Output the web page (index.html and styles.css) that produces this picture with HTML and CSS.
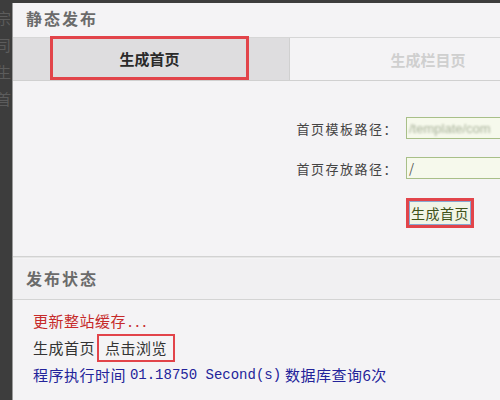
FILE: index.html
```html
<!DOCTYPE html>
<html lang="zh-CN">
<head>
    <meta charset="UTF-8">
    <title>静态发布</title>
    <link rel="stylesheet" href="styles.css">
</head>
<body>
    <div class="side">
        <span>宗</span>
        <span>司</span>
        <span>生</span>
        <span>首</span>
    </div>

    <div class="panel">
        <div class="title">静态发布</div>

        <div class="tabs">
            <div class="tab active">
                <div class="mark">生成首页</div>
            </div>
            <div class="tab">生成栏目页</div>
        </div>

        <div class="form">
            <div class="row">
                <label>首页模板路径：</label>
                <div class="field"><span class="blur">/template/com</span></div>
            </div>
            <div class="row">
                <label>首页存放路径：</label>
                <div class="field">/</div>
            </div>
            <div class="row">
                <label></label>
                <div class="mark-btn"><button>生成首页</button></div>
            </div>
        </div>

        <div class="section-head">发布状态</div>

        <div class="status">
            <div class="line red">更新整站缓存<span class="dots">...</span></div>
            <div class="line">生成首页 <span class="mark-link">点击浏览</span></div>
            <div class="line blue">程序执行时间 <span class="mono">01.18750 Second(s)</span> 数据库查询6次</div>
        </div>
    </div>
</body>
</html>
```

FILE: styles.css
```css
body {
    margin: 0;
    background: #3d3d3d;
    font-family: 'Noto Sans CJK SC', 'DejaVu Sans', sans-serif;
    display: flex;
    height: 400px;
    overflow: hidden;
    padding-top: 3px;
    box-sizing: border-box;
}

.side {
    width: 12px;
    flex-shrink: 0;
    display: flex;
    flex-direction: column;
    gap: 9px;
    padding-top: 6px;
    overflow: hidden;
    color: #5c5c5c;
    font-size: 15px;
    line-height: 18px;
    text-indent: -4px;
}

.panel {
    flex: 1;
    background: #f4f3f5;
    overflow: hidden;
    border-left: 1px solid #9a9a9a;
}

.title {
    height: 34px;
    line-height: 30px;
    padding-left: 13px;
    font-size: 16px;
    font-weight: bold;
    color: #6b6b6b;
    letter-spacing: 2px;
}

.tabs {
    display: flex;
    height: 42px;
    border-top: 1px solid #d6d6d6;
    border-bottom: 1px solid #d0d0d0;
}

.tab {
    width: 277px;
    flex-shrink: 0;
    display: flex;
    align-items: center;
    justify-content: center;
    font-size: 15px;
    font-weight: bold;
    color: #cfcfcf;
    border-left: 1px solid #d0d0d0;
    box-sizing: border-box;
}

.tab.active {
    width: 276px;
    border-left: none;
    background: #dedddf;
    justify-content: flex-start;
    padding-left: 37px;
}

.mark {
    width: 199px;
    height: 44px;
    margin-top: -2px;
    box-sizing: border-box;
    border: 3px solid #e2444a;
    display: flex;
    align-items: center;
    justify-content: center;
    color: #2a2a2a;
    font-size: 15px;
}

.form {
    padding-top: 36px;
    height: 139px;
    border-bottom: 1px solid #d2d2d2;
    box-shadow: 0 1px 0 #e6e6e6;
}

.row {
    display: flex;
    align-items: center;
    margin-bottom: 18px;
}

.row label {
    width: 393px;
    text-align: right;
    font-size: 13px;
    letter-spacing: 1.5px;
    color: #444;
    padding-right: 8px;
    box-sizing: border-box;
}

.field {
    flex: 1;
    height: 20px;
    border: 1px solid #a8bf88;
    border-right: none;
    background: #f6f9ec;
    font-size: 13px;
    line-height: 20px;
    color: #555;
    padding-left: 2px;
    overflow: hidden;
    white-space: nowrap;
}

.blur {
    color: #a8b29a;
    filter: blur(1px);
    font-family: 'Liberation Sans', sans-serif;
}

.mark-btn {
    margin-left: 0;
    margin-top: 1px;
    border: 3px solid #e2444a;
    padding: 0;
}

.mark-btn button {
    font-family: 'Noto Sans CJK SC', sans-serif;
    font-size: 14px;
    line-height: 22px;
    letter-spacing: 0.5px;
    color: #3f5218;
    background: #f1f4e6;
    border: 1px solid #88a8d0;
    padding: 0 1px;
    margin: 0;
    display: block;
}

.section-head {
    height: 40px;
    line-height: 38px;
    padding-left: 13px;
    margin-top: 2px;
    font-size: 16px;
    font-weight: bold;
    color: #6b6b6b;
    letter-spacing: 2px;
    background: #f1f0f2;
    border-bottom: 1px solid #d4d4d4;
}

.status {
    padding: 7px 0 0 20px;
    font-size: 15px;
    letter-spacing: 0.5px;
    color: #333;
}

.line {
    height: 27px;
    line-height: 26px;
    display: flex;
    align-items: center;
    white-space: pre;
}

.dots {
    letter-spacing: 3px;
    margin-left: 2px;
}

.red {
    color: #c62a2a;
}

.blue {
    color: #23239a;
}

.mark-link {
    border: 2px solid #e2444a;
    padding: 0 6px;
    line-height: 24px;
    margin-left: -2px;
}

.mono {
    font-family: 'Liberation Mono', monospace;
    font-size: 14px;
    letter-spacing: 0;
}
```
